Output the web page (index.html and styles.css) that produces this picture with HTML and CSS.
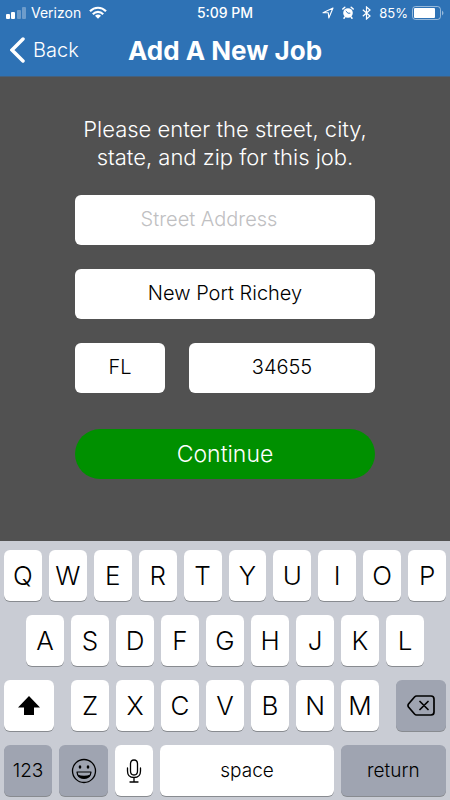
FILE: index.html
```html
<!DOCTYPE html>
<html lang="en">
<head>
<meta charset="utf-8">
<meta name="viewport" content="width=device-width, initial-scale=1">
<title>Add A New Job</title>
<link rel="stylesheet" href="styles.css">
</head>
<body>
<header class="header">
  <div class="status">
    <div class="status-side">
      <svg class="signal" viewBox="0 0 20 12" width="20" height="12" aria-hidden="true"><g fill="#fff"><rect y="7" width="4" height="5" rx="1"/><rect x="5" y="5" width="4" height="7" rx="1"/><g opacity=".3"><rect x="11" y="3" width="4" height="9" rx="1"/><rect x="16" width="4" height="12" rx="1"/></g></g></svg>
      <span>Verizon</span>
      <svg class="wifi" viewBox="0 0 18 13" width="18" height="13" aria-hidden="true"><g fill="none" stroke="#fff" stroke-width="2.200"><path d="M1 5.200C5.500.6 12.500.6 17 5.200"/><path d="M3.800 8.200C6.800 5.200 11.200 5.200 14.200 8.200"/></g><path d="M9 12.800 6 9.800Q9 7.400 12 9.800Z" fill="#fff"/></svg>
    </div>
    <span class="clock">5:09 PM</span>
    <div class="status-side status-end">
      <svg viewBox="0 0 12 12" width="12" height="12" aria-hidden="true"><path d="M1 5.800 11 1 6.800 11 6.300 5.800Z" fill="none" stroke="#fff" stroke-width="1.100" stroke-linejoin="round"/></svg>
      <svg class="alarm" viewBox="0 0 12 13" width="12" height="13" aria-hidden="true"><circle cx="6" cy="7" r="4.800" fill="#fff"/><path d="M.8 3 2.800 1.200M11.200 3 9.200 1.200M2.700 11.200 2 12.200M9.300 11.200l.7 1" stroke="#fff" stroke-width="1.500" stroke-linecap="round"/><path d="M3.800 5 6 7.200H8.300" fill="none" stroke="#2e72b5" stroke-width="1"/></svg>
      <svg viewBox="0 0 9 14" width="9" height="14" aria-hidden="true"><path d="M.8 3.800 8 10 4.500 13V1L8 4 .8 10.200" fill="none" stroke="#fff" stroke-width="1.200"/></svg>
      <span class="percent">85%</span>
      <svg class="battery" viewBox="0 0 32 14" width="32" height="14" aria-hidden="true"><rect x=".5" y=".5" width="28" height="13" rx="3" fill="none" stroke="#fff" opacity=".5"/><rect x="2" y="2" width="21" height="10" rx="1" fill="#fff"/><path d="M30 4.500q3 2.500 0 5z" fill="#fff" opacity=".5"/></svg>
    </div>
  </div>
  <nav class="nav">
    <a class="back" href="#"><svg viewBox="0 0 15 26" width="15" height="26" aria-hidden="true"><path d="M13 2 2 13 13 24" fill="none" stroke="#fff" stroke-width="3.500" stroke-linecap="round" stroke-linejoin="miter"/></svg>Back</a>
    <h1 class="title">Add A New Job</h1>
  </nav>
</header>

<main class="main">
  <form class="form">
    <p class="prompt">Please enter the street, city, state, and zip for this job.</p>
    <input class="field field-clearable" type="text" placeholder="Street Address" aria-label="Street Address">
    <input class="field" type="text" value="New Port Richey" aria-label="City">
    <div class="pair">
      <input class="field" type="text" value="FL" aria-label="State">
      <input class="field" type="text" value="34655" aria-label="Zip">
    </div>
    <button class="continue" type="button">Continue</button>
  </form>
</main>

<section class="keyboard" aria-label="Keyboard">
  <div class="keys">
    <button class="key">Q</button><button class="key">W</button><button class="key">E</button><button class="key">R</button><button class="key">T</button><button class="key">Y</button><button class="key">U</button><button class="key">I</button><button class="key">O</button><button class="key">P</button>
  </div>
  <div class="keys keys-home">
    <button class="key">A</button><button class="key">S</button><button class="key">D</button><button class="key">F</button><button class="key">G</button><button class="key">H</button><button class="key">J</button><button class="key">K</button><button class="key">L</button>
  </div>
  <div class="row-shift">
    <button class="key" aria-label="Shift"><svg viewBox="0 0 22 20" width="22" height="20" aria-hidden="true"><path d="M11 0 22 11.500H16V19H6V11.500H0Z"/></svg></button>
    <div class="keys">
      <button class="key">Z</button><button class="key">X</button><button class="key">C</button><button class="key">V</button><button class="key">B</button><button class="key">N</button><button class="key">M</button>
    </div>
    <button class="key key-dark" aria-label="Delete"><svg viewBox="0 0 28 21" width="28" height="21" aria-hidden="true"><path d="M9.500 1H24q3 0 3 3V17q0 3-3 3H9.500Q8.500 20 7.500 19L1.500 12Q.5 10.500 1.500 9L7.500 2Q8.500 1 9.500 1ZM13 6.500l8 8M21 6.500l-8 8" fill="none" stroke="#000" stroke-width="1.700" stroke-linecap="round"/></svg></button>
  </div>
  <div class="row-space">
    <button class="key key-dark key-word">123</button>
    <button class="key key-dark" aria-label="Emoji"><svg viewBox="0 0 26 26" width="26" height="26" aria-hidden="true"><circle cx="13" cy="13" r="11.500" fill="none" stroke="#000" stroke-width="1.300"/><ellipse cx="9" cy="9" rx="1.300" ry="1.700"/><ellipse cx="17" cy="9" rx="1.300" ry="1.700"/><path d="M6 14H20Q19.500 20.500 13 20.500T6 14Z" fill="none" stroke="#000" stroke-width="1.200" stroke-linejoin="round"/><path d="M6.500 16.500Q13 19 19.500 16.500 18 20.500 13 20.500T6.500 16.500Z"/></svg></button>
    <button class="key" aria-label="Dictate"><svg viewBox="0 0 16 24" width="16" height="24" aria-hidden="true"><path d="M8 1q3.500 0 3.500 4v7q0 4-3.500 4t-3.500-4V5Q4.500 1 8 1ZM1.500 9v3q0 6.500 6.500 6.500t6.500-6.500V9M8 18.500V23M4 23h8" fill="none" stroke="#000" stroke-width="1.300" stroke-linecap="round"/></svg></button>
    <button class="key key-word">space</button>
    <button class="key key-dark key-word">return</button>
  </div>
</section>
</body>
</html>
```
FILE: styles.css
```css
* {
  box-sizing: border-box;
}

body {
  margin: 0;
  min-height: 100vh;
  display: flex;
  flex-direction: column;
  font-family: Inter, "Liberation Sans", sans-serif;
  font-weight: 300;
  background: #515151;
}

button,
input {
  font: inherit;
  border: 0;
  margin: 0;
  padding: 0;
}

svg {
  display: block;
  flex: none;
}

/* Header */
.header {
  background: #2e72b5;
  color: #fff;
  padding-bottom: 1px;
  border-bottom: 1px solid #45607c;
}

.status {
  display: grid;
  grid-template-columns: 1fr auto 1fr;
  align-items: center;
  height: 25px;
  padding: 0 6px;
  font-size: 14px;
  font-weight: 400;
}

.status-side {
  display: flex;
  align-items: center;
  gap: 5px;
}

.status-end {
  justify-content: flex-end;
  gap: 8px;
}

.wifi {
  margin-left: 3px;
}

.clock {
  font-weight: 500;
}

.percent {
  font-size: 13px;
}

.battery {
  margin-left: -4px;
}

.nav {
  display: grid;
  grid-template-columns: 1fr auto 1fr;
  align-items: center;
  height: 50px;
  padding: 0 10px;
}

.back {
  display: flex;
  align-items: center;
  gap: 8px;
  color: #fff;
  font-size: 20px;
  text-decoration: none;
}

.title {
  margin: 0;
  font-size: 26px;
  font-weight: 700;
}

/* Job form */
.main {
  flex: 1;
  padding: 38px 24px;
}

.form {
  max-width: 300px;
  margin: 0 auto;
  display: flex;
  flex-direction: column;
  gap: 24px;
}

.prompt {
  margin: 0;
  color: #fff;
  font-size: 22px;
  line-height: 28px;
  text-align: center;
}

.field {
  width: 100%;
  min-width: 0;
  height: 50px;
  padding: 0 8px 2px;
  border-radius: 6px;
  background: #fff;
  color: #000;
  font-size: 20px;
  text-align: center;
}

.field-clearable {
  padding-right: 40px;
}

.field::placeholder {
  color: #c0c0c2;
  opacity: 1;
}

.pair {
  display: grid;
  grid-template-columns: 90fr 186fr;
  gap: 24px;
}

.continue {
  height: 50px;
  margin-top: 12px;
  border-radius: 25px;
  background: #009000;
  color: #fff;
  font-size: 23px;
}

/* Keyboard */
.keyboard {
  display: flex;
  flex-direction: column;
  gap: 14px;
  padding: 9px 4px 4px;
  background: #c9ccd4;
}

.keys {
  display: grid;
  grid-auto-flow: column;
  grid-auto-columns: 1fr;
  gap: 7px;
}

.keys-home {
  padding: 0 22px;
}

.row-shift {
  display: grid;
  grid-template-columns: 50fr 308fr 50fr;
  gap: 17px;
}

.row-space {
  display: grid;
  grid-template-columns: 48fr 49fr 38fr 173fr 105fr;
  gap: 7px;
}

.key {
  display: flex;
  align-items: center;
  justify-content: center;
  min-width: 0;
  height: 51px;
  border-radius: 6px;
  background: #fff;
  box-shadow: 0 1px 0 #888b90;
  color: #000;
  font-size: 26px;
}

.key-word {
  font-size: 19px;
}

.key-dark {
  background: #9fa4b1;
}
```
